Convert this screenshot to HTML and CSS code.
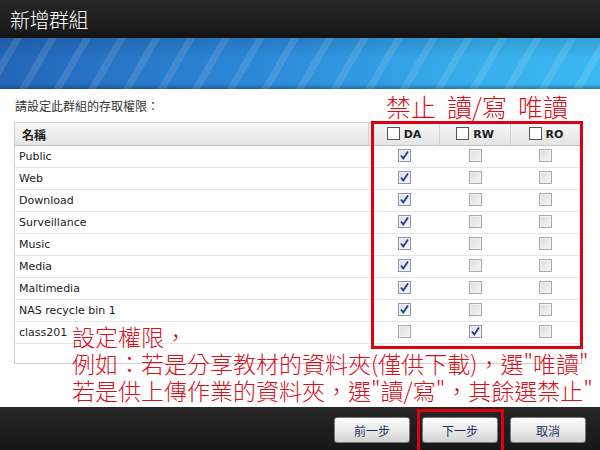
FILE: index.html
```html
<!DOCTYPE html>
<html lang="zh-Hant">
<head>
  <meta charset="UTF-8">
  <title>新增群組</title>
  <link rel="stylesheet" href="styles.css">
</head>
<body>
  <div class="dialog">
    <header class="titlebar">
      <h1>新增群組</h1>
    </header>
    <div class="banner"></div>

    <div class="content">
      <div class="intro">
        <p class="prompt">請設定此群組的存取權限：</p>
        <div class="legend">
          <span>禁止</span>
          <span>讀/寫</span>
          <span>唯讀</span>
        </div>
      </div>

      <div class="grid-box">
        <table class="perm-table">
          <thead>
            <tr>
              <th class="name-col">名稱</th>
              <th><span class="hbox"></span>DA</th>
              <th><span class="hbox"></span>RW</th>
              <th><span class="hbox"></span>RO</th>
            </tr>
          </thead>
          <tbody>
            <tr><td>Public</td><td><span class="cb on"></span></td><td><span class="cb"></span></td><td><span class="cb"></span></td></tr>
            <tr><td>Web</td><td><span class="cb on"></span></td><td><span class="cb"></span></td><td><span class="cb"></span></td></tr>
            <tr><td>Download</td><td><span class="cb on"></span></td><td><span class="cb"></span></td><td><span class="cb"></span></td></tr>
            <tr><td>Surveillance</td><td><span class="cb on"></span></td><td><span class="cb"></span></td><td><span class="cb"></span></td></tr>
            <tr><td>Music</td><td><span class="cb on"></span></td><td><span class="cb"></span></td><td><span class="cb"></span></td></tr>
            <tr><td>Media</td><td><span class="cb on"></span></td><td><span class="cb"></span></td><td><span class="cb"></span></td></tr>
            <tr><td>Maltimedia</td><td><span class="cb on"></span></td><td><span class="cb"></span></td><td><span class="cb"></span></td></tr>
            <tr><td>NAS recycle bin 1</td><td><span class="cb on"></span></td><td><span class="cb"></span></td><td><span class="cb"></span></td></tr>
            <tr><td>class201</td><td><span class="cb"></span></td><td><span class="cb on"></span></td><td><span class="cb"></span></td></tr>
          </tbody>
        </table>
      </div>

      <!-- 註解標示 -->
      <div class="mark mark-cols"></div>
      <div class="note">
        設定權限，<br>
        例如：若是分享教材的資料夾(僅供下載)，選"唯讀"<br>
        若是供上傳作業的資料夾，選"讀/寫"，其餘選禁止"
      </div>
    </div>

    <footer class="footer">
      <button class="btn">前一步</button>
      <button class="btn">下一步</button>
      <button class="btn">取消</button>
      <div class="mark mark-next"></div>
    </footer>
  </div>
</body>
</html>
```

FILE: styles.css
```css
:root {
  --red: #d8101c;
  --cjk: "Noto Sans CJK TC", "Noto Sans", sans-serif;
}
body {
  margin: 0;
  font-family: "DejaVu Sans", "Noto Sans CJK TC", sans-serif;
  background: #fff;
}
.dialog {
  width: 600px;
  height: 450px;
  display: flex;
  flex-direction: column;
  position: relative;
  overflow: hidden;
}

/* 標題列 */
.titlebar {
  height: 38px;
  flex: none;
  background: linear-gradient(#262626, #1a1a1a 80%, #121212);
  display: flex;
  align-items: center;
  padding-left: 10px;
}
.titlebar h1 {
  margin: 0;
  font-family: var(--cjk);
  font-weight: 300;
  font-size: 20px;
  color: #fff;
  letter-spacing: -0.5px;
}
.banner {
  height: 51px;
  flex: none;
  background:
    repeating-linear-gradient(120deg, rgba(255,255,255,0) 0 12px, rgba(255,255,255,0.11) 12px 19px, rgba(255,255,255,0) 19px 30px),
    linear-gradient(rgba(0,20,60,0.15), rgba(0,0,0,0) 40%, rgba(0,0,0,0) 90%, rgba(0,40,90,0.4)),
    linear-gradient(90deg, #2466b8, #2d8ad8 45%, #37b0ec 80%, #3cb8f0);
}

/* 內容 */
.content {
  flex: 1;
  position: relative;
  padding: 0 18px 0 14px;
}
.intro {
  height: 33px;
  display: flex;
  align-items: center;
  justify-content: space-between;
}
.prompt {
  margin: 0 0 0 1px;
  font-family: var(--cjk);
  font-size: 12px;
  color: #333;
}
.legend {
  display: flex;
  margin-right: 6px;
}
.legend span {
  width: 66px;
  text-align: center;
  font-family: var(--cjk);
  font-weight: 300;
  font-size: 25px;
  line-height: 28px;
  color: var(--red);
}
.grid-box {
  height: 240px;
  border: 1px solid #cfcfcf;
}
.perm-table {
  width: 100%;
  border-collapse: collapse;
  font-size: 11px;
  color: #222;
}
.perm-table th {
  height: 22px;
  padding: 0;
  background: linear-gradient(#f7f7f7, #e4e4e4);
  border-bottom: 1px solid #c4c4c4;
  border-left: 1px solid #d2d2d2;
  font-weight: bold;
  font-size: 11px;
  width: 70px;
  text-align: center;
  vertical-align: middle;
  white-space: nowrap;
}
.perm-table th.name-col {
  width: auto;
  border-left: none;
  text-align: left;
  padding-left: 7px;
  font-family: var(--cjk);
  font-size: 12px;
}
.hbox {
  display: inline-block;
  width: 11px;
  height: 11px;
  border: 1px solid #555;
  background: #fff;
  vertical-align: -2px;
  margin-right: 4px;
}
.perm-table td {
  height: 21px;
  padding: 0;
  border-bottom: 1px solid #e6e6e6;
  text-align: center;
  vertical-align: middle;
}
.perm-table td:first-child {
  text-align: left;
  padding-left: 4px;
}
.cb {
  display: inline-block;
  width: 11px;
  height: 11px;
  border: 1px solid #a9a9a9;
  background: linear-gradient(135deg, #dcdcdc, #f6f6f6);
  box-shadow: inset 0 0 0 1px #f2f2f2;
  vertical-align: middle;
  position: relative;
  top: -1px;
}
.cb.on {
  border-color: #8e97aa;
  background:
    url("data:image/svg+xml,%3Csvg xmlns='http://www.w3.org/2000/svg' viewBox='0 0 11 11'%3E%3Cpath d='M2 5.5 L4.3 8.5 L9 1.5' fill='none' stroke='%23233a8c' stroke-width='1.8'/%3E%3C/svg%3E") center/11px no-repeat,
    linear-gradient(135deg, #d9dde6, #f4f5f8);
}

/* 紅框與說明 */
.mark {
  position: absolute;
  border: 3px solid #dc0010;
  pointer-events: none;
}
.mark-cols {
  left: 371px;
  top: 32px;
  width: 206px;
  height: 222px;
}
.note {
  position: absolute;
  left: 72px;
  top: 234px;
  font-family: var(--cjk);
  font-weight: 300;
  font-size: 23px;
  line-height: 27px;
  color: var(--red);
  white-space: nowrap;
}

/* 底部按鈕列 */
.footer {
  height: 43px;
  flex: none;
  position: relative;
  background: linear-gradient(#262626, #161616);
  display: flex;
  justify-content: flex-end;
  align-items: flex-start;
  gap: 12px;
  padding: 10px 14px 0 0;
  box-sizing: border-box;
}
.btn {
  width: 76px;
  height: 26px;
  border: 1px solid #777;
  border-radius: 3px;
  background: linear-gradient(#fdfdfd, #e6e6e6 60%, #d2d2d2);
  font-family: var(--cjk);
  font-size: 12px;
  color: #1d3566;
  padding: 0;
}
.mark-next {
  left: 417px;
  top: 2px;
  width: 81px;
  height: 38px;
}
```
